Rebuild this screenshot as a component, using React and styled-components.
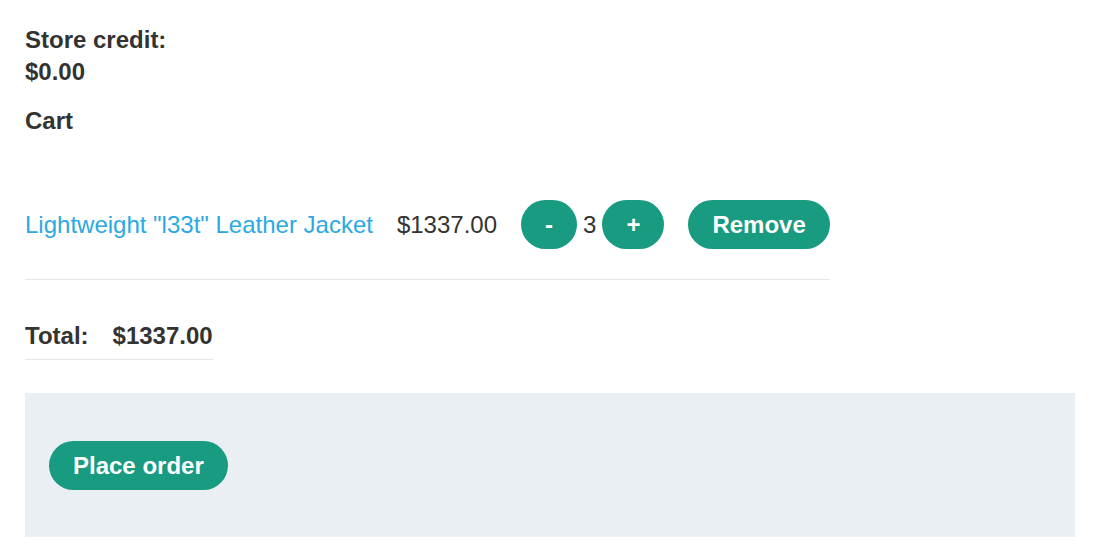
import styled, { createGlobalStyle } from "styled-components";

const GlobalStyle = createGlobalStyle`
  body {
    margin: 0;
    background: #fff;
    color: #333332;
    font-family: "Liberation Sans", Arial, sans-serif;
    font-size: 24px;
  }
`;

const Page = styled.div`
  padding: 24px 24px 14px 25px;
`;

const Strong = styled.p`
  margin: 0;
  font-weight: bold;
  line-height: 32px;
  margin-top: ${(p) => p.$gap || 0}px;
`;

const CartRow = styled.div`
  display: inline-flex;
  align-items: center;
  gap: 24px;
  margin-top: 63px;
  padding-bottom: 30px;
  border-bottom: 1px solid #e6e6e6;
`;

const ProductLink = styled.a`
  color: #2ba9e1;
  text-decoration: none;
`;

const Qty = styled.div`
  display: flex;
  align-items: center;
  gap: 6px;
`;

const Button = styled.button`
  height: 49px;
  padding: 0 24px;
  border: 0;
  border-radius: 25px;
  background: #189b80;
  color: #fff;
  font-family: inherit;
  font-size: 24px;
  font-weight: bold;
  cursor: pointer;
`;

const TotalRow = styled.div`
  display: flex;
  width: fit-content;
  gap: 24px;
  margin-top: 42px;
  padding-bottom: 9px;
  border-bottom: 1px solid #e6e6e6;
  font-weight: bold;
`;

const Panel = styled.div`
  margin-top: 33px;
  height: 144px;
  box-sizing: border-box;
  padding: 48px 24px;
  background: #e9eff2;
`;

export default function App() {
  return (
    <>
      <GlobalStyle />
      <Page>
        <Strong>Store credit:</Strong>
        <Strong>$0.00</Strong>
        <Strong $gap={17}>Cart</Strong>
        <CartRow>
          <ProductLink href="#">Lightweight "l33t" Leather Jacket</ProductLink>
          <span>$1337.00</span>
          <Qty>
            <Button>-</Button>
            <span>3</span>
            <Button>+</Button>
          </Qty>
          <Button>Remove</Button>
        </CartRow>
        <TotalRow>
          <span>Total:</span>
          <span>$1337.00</span>
        </TotalRow>
        <Panel>
          <Button>Place order</Button>
        </Panel>
      </Page>
    </>
  );
}
